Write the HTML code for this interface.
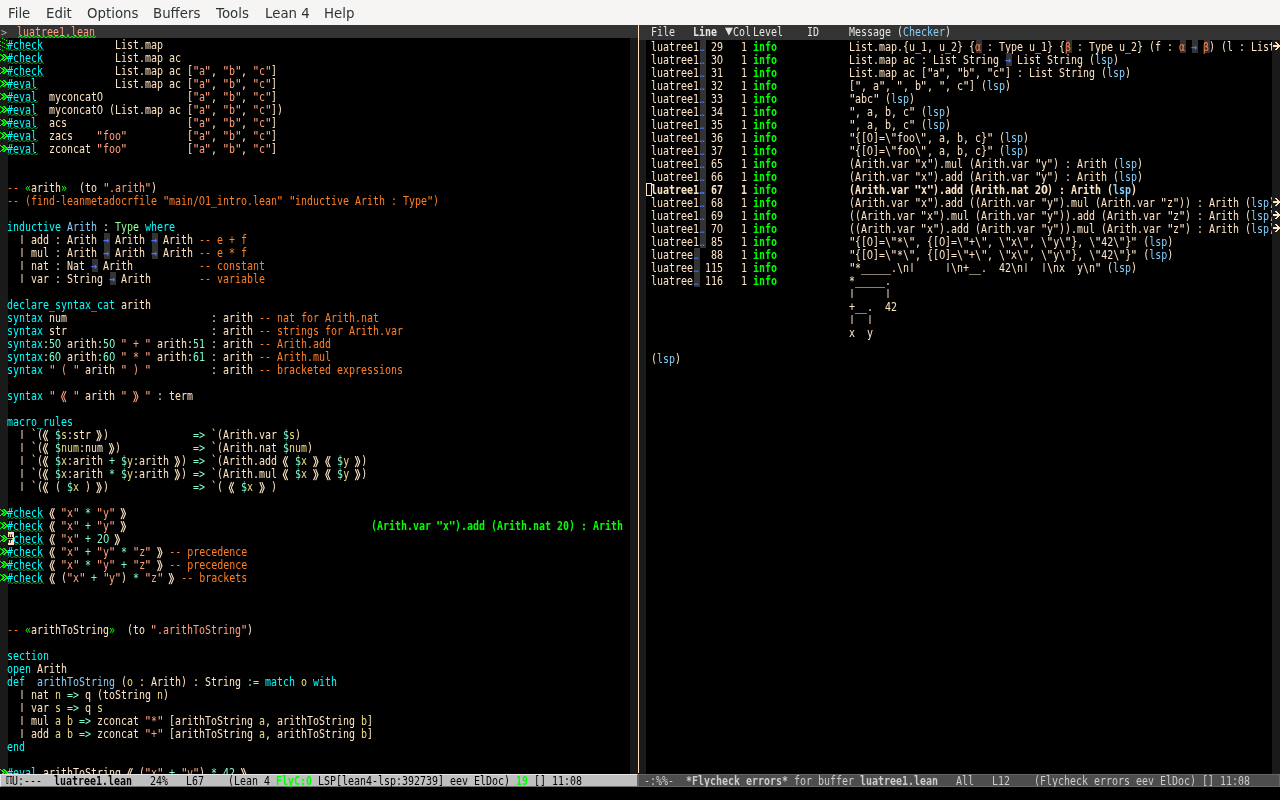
<!DOCTYPE html>
<html lang="en"><head><meta charset="utf-8"><title>emacs - luatree1.lean</title>
<style>
html,body{margin:0;padding:0}
body{width:1280px;height:800px;overflow:hidden;position:relative;background:#000;color:#ffe4c4;
 font-family:"DejaVu Sans Mono","Liberation Mono",monospace;font-size:12px;line-height:13px;letter-spacing:0.00000px;
 -webkit-font-smoothing:antialiased}
div,span,i,b{margin:0;padding:0}
i{font-style:normal}
.abs{position:absolute}
.r{position:absolute;height:13px;white-space:pre;overflow:visible;margin-left:-1px;transform:scaleX(0.83049);transform-origin:0 0}
.k{color:#00ffff}.c{color:#ff7f24}.s{color:#ffa07a}.f{color:#87cefa}.t{color:#98fb98}
.n{color:#7fffd4}.v{color:#eedd82}.g{color:#00ff00}
.ar{color:#4876ff;font-weight:bold}
.al{color:#ff7f50}
.el{color:#4876ff;display:inline-block;width:7.2246px;letter-spacing:0;font-size:10px;text-indent:0.6px;position:relative;top:-0.5px}
.cur{color:#000}
.b{font-weight:bold}
.gb{color:#00ff00;font-weight:bold}
.ql,.qr{display:inline-block;width:7.2246px;height:13px;vertical-align:top;letter-spacing:0;font-size:12px;overflow:visible;
 font-family:"Noto Sans CJK SC","Noto Sans CJK JP",sans-serif;position:relative;top:0px;font-weight:700;transform:scaleX(1.2041);transform-origin:0 0}
.vb{display:inline-block;height:13px;vertical-align:top;transform:translateY(-1.3px) scaleY(.77);transform-origin:50% 50%}
.dq{display:inline-block;transform:scaleX(1.2041);transform-origin:50% 0}
.z{display:inline-block;width:7.2246px;font-family:"DejaVu Sans","Liberation Sans",sans-serif;text-indent:-0.2px}
.ql{text-indent:-6.20px}
.qr{text-indent:-0.60px}
#menubar{left:0;top:0;width:1280px;height:25px;background:#f6f5f4;color:#2e3436;
 font-family:"DejaVu Sans","Liberation Sans",sans-serif;font-size:13.33px;letter-spacing:0;line-height:28px}
#menubar span{position:absolute;top:0}
.fr{background:#1a1a1a}
.hl{background:#333;color:#e5e5e5}
#mlL{left:0;top:774px;width:638px;height:13px;background:#bfbfbf;color:#000;white-space:pre;box-sizing:border-box}
#mlR{left:638px;top:774px;width:642px;height:13px;background:#4d4d4d;color:#ccc;white-space:pre;box-sizing:border-box}
svg{position:absolute;overflow:visible}
</style></head><body>
<div id="all" style="position:absolute;left:0;top:0;width:1280px;height:800px;will-change:transform">
<div id="menubar" class="abs"><span style="left:8px">File</span><span style="left:46px">Edit</span><span style="left:87px">Options</span><span style="left:153px">Buffers</span><span style="left:216px">Tools</span><span style="left:265px">Lean 4</span><span style="left:324px">Help</span></div>
<div class="abs fr" style="left:0;top:38px;width:8px;height:736px"></div><div class="abs fr" style="left:630px;top:38px;width:8px;height:736px"></div><div class="abs" style="left:638px;top:25px;width:1px;height:748px;background:#ffe4c4"></div><div class="abs fr" style="left:639px;top:40px;width:7px;height:734px"></div>
<div class="abs hl" style="left:0;top:25px;width:638px;height:13px"></div><div class="abs hl" style="left:639px;top:25px;width:641px;height:15px"></div>
<div class="r" style="left:2px;top:26px;color:#b3b3b3;font-size:10px;letter-spacing:0;transform:none">&gt;</div><div class="r s" style="left:18px;top:26px">luatree1.lean</div>
<svg style="left:18px;top:36px" width="78" height="2" viewBox="0 0 78 2"><polyline points="0,1.6 2,0.4 4,1.6 6,0.4 8,1.6 10,0.4 12,1.6 14,0.4 16,1.6 18,0.4 20,1.6 22,0.4 24,1.6 26,0.4 28,1.6 30,0.4 32,1.6 34,0.4 36,1.6 38,0.4 40,1.6 42,0.4 44,1.6 46,0.4 48,1.6 50,0.4 52,1.6 54,0.4 56,1.6 58,0.4 60,1.6 62,0.4 64,1.6 66,0.4 68,1.6 70,0.4 72,1.6 74,0.4 76,1.6 78,0.4" fill="none" stroke="#00ff00" stroke-width="1"/></svg>
<div class="r" style="left:652px;top:26px;color:#e5e5e5">File</div><div class="r b" style="left:694px;top:26px;color:#e5e5e5">Line</div><div class="r" style="left:734px;top:26px;color:#e5e5e5">Col</div><div class="r" style="left:754px;top:26px;color:#e5e5e5">Level</div><div class="r" style="left:808px;top:26px;color:#e5e5e5">ID</div><div class="r" style="left:726px;top:24px;color:#e5e5e5;letter-spacing:0;font-size:13px;transform:none">▼</div><div class="r" style="left:850px;top:26px;color:#e5e5e5">Message (<span class="f">Checker</span>)</div>
<div class="r" style="left:8px;top:39px"><span class="k">#check</span>            List.map</div>
<div class="r" style="left:8px;top:52px"><span class="k">#check</span>            List.map ac</div>
<div class="r" style="left:8px;top:65px"><span class="k">#check</span>            List.map ac [<span class="s"><i class="dq">"</i>a<i class="dq">"</i></span>, <span class="s"><i class="dq">"</i>b<i class="dq">"</i></span>, <span class="s"><i class="dq">"</i>c<i class="dq">"</i></span>]</div>
<div class="r" style="left:8px;top:78px"><span class="k">#eval</span>             List.map ac [<span class="s"><i class="dq">"</i>a<i class="dq">"</i></span>, <span class="s"><i class="dq">"</i>b<i class="dq">"</i></span>, <span class="s"><i class="dq">"</i>c<i class="dq">"</i></span>]</div>
<div class="r" style="left:8px;top:91px"><span class="k">#eval</span>  myconcat<i class="z">0</i>              [<span class="s"><i class="dq">"</i>a<i class="dq">"</i></span>, <span class="s"><i class="dq">"</i>b<i class="dq">"</i></span>, <span class="s"><i class="dq">"</i>c<i class="dq">"</i></span>]</div>
<div class="r" style="left:8px;top:104px"><span class="k">#eval</span>  myconcat<i class="z">0</i> (List.map ac [<span class="s"><i class="dq">"</i>a<i class="dq">"</i></span>, <span class="s"><i class="dq">"</i>b<i class="dq">"</i></span>, <span class="s"><i class="dq">"</i>c<i class="dq">"</i></span>])</div>
<div class="r" style="left:8px;top:117px"><span class="k">#eval</span>  acs                    [<span class="s"><i class="dq">"</i>a<i class="dq">"</i></span>, <span class="s"><i class="dq">"</i>b<i class="dq">"</i></span>, <span class="s"><i class="dq">"</i>c<i class="dq">"</i></span>]</div>
<div class="r" style="left:8px;top:130px"><span class="k">#eval</span>  zacs    <span class="s"><i class="dq">"</i>foo<i class="dq">"</i></span>          [<span class="s"><i class="dq">"</i>a<i class="dq">"</i></span>, <span class="s"><i class="dq">"</i>b<i class="dq">"</i></span>, <span class="s"><i class="dq">"</i>c<i class="dq">"</i></span>]</div>
<div class="r" style="left:8px;top:143px"><span class="k">#eval</span>  zconcat <span class="s"><i class="dq">"</i>foo<i class="dq">"</i></span>          [<span class="s"><i class="dq">"</i>a<i class="dq">"</i></span>, <span class="s"><i class="dq">"</i>b<i class="dq">"</i></span>, <span class="s"><i class="dq">"</i>c<i class="dq">"</i></span>]</div>
<div class="r" style="left:8px;top:182px"><span class="c">-- </span><span class="g">«</span>arith<span class="g">»</span>  (to <span class="s"><i class="dq">"</i>.arith<i class="dq">"</i></span>)</div>
<div class="r" style="left:8px;top:195px"><span class="c">-- (find-leanmetadocrfile <i class="dq">"</i>main/<i class="z">0</i>1_intro.lean<i class="dq">"</i> <i class="dq">"</i>inductive Arith : Type<i class="dq">"</i>)</span></div>
<div class="r" style="left:8px;top:221px"><span class="k">inductive</span> <span class="f">Arith</span> : <span class="t">Type</span> <span class="k">where</span></div>
<div class="abs" style="left:104px;top:233px;width:6px;height:13px;background:#333"></div><div class="abs" style="left:152px;top:233px;width:6px;height:13px;background:#333"></div><div class="r" style="left:8px;top:234px">  <i class="vb">|</i> add : Arith <span class="ar">→</span> Arith <span class="ar">→</span> Arith <span class="c">-- e + f</span></div>
<div class="abs" style="left:104px;top:246px;width:6px;height:13px;background:#333"></div><div class="abs" style="left:152px;top:246px;width:6px;height:13px;background:#333"></div><div class="r" style="left:8px;top:247px">  <i class="vb">|</i> mul : Arith <span class="ar">→</span> Arith <span class="ar">→</span> Arith <span class="c">-- e * f</span></div>
<div class="abs" style="left:92px;top:259px;width:6px;height:13px;background:#333"></div><div class="r" style="left:8px;top:260px">  <i class="vb">|</i> nat : Nat <span class="ar">→</span> Arith           <span class="c">-- constant</span></div>
<div class="abs" style="left:110px;top:272px;width:6px;height:13px;background:#333"></div><div class="r" style="left:8px;top:273px">  <i class="vb">|</i> var : String <span class="ar">→</span> Arith        <span class="c">-- variable</span></div>
<div class="r" style="left:8px;top:299px"><span class="k">declare_syntax_cat</span> arith</div>
<div class="r" style="left:8px;top:312px"><span class="k">syntax</span> num                        : arith <span class="c">-- nat for Arith.nat</span></div>
<div class="r" style="left:8px;top:325px"><span class="k">syntax</span> str                        : arith <span class="c">-- strings for Arith.var</span></div>
<div class="r" style="left:8px;top:338px"><span class="k">syntax</span>:<span class="n">5<i class="z">0</i></span> arith:<span class="n">5<i class="z">0</i></span> <span class="s"><i class="dq">"</i> + <i class="dq">"</i></span> arith:<span class="n">51</span> : arith <span class="c">-- Arith.add</span></div>
<div class="r" style="left:8px;top:351px"><span class="k">syntax</span>:<span class="n">6<i class="z">0</i></span> arith:<span class="n">6<i class="z">0</i></span> <span class="s"><i class="dq">"</i> * <i class="dq">"</i></span> arith:<span class="n">61</span> : arith <span class="c">-- Arith.mul</span></div>
<div class="r" style="left:8px;top:364px"><span class="k">syntax</span> <span class="s"><i class="dq">"</i> ( <i class="dq">"</i></span> arith <span class="s"><i class="dq">"</i> ) <i class="dq">"</i></span>          : arith <span class="c">-- bracketed expressions</span></div>
<div class="r" style="left:8px;top:390px"><span class="k">syntax</span> <span class="s"><i class="dq">"</i> <i class="ql">《</i> <i class="dq">"</i></span> arith <span class="s"><i class="dq">"</i> <i class="qr">》</i> <i class="dq">"</i></span> : term</div>
<div class="r" style="left:8px;top:416px"><span class="k">macro_rules</span></div>
<div class="r" style="left:8px;top:429px">  <i class="vb">|</i> `(<i class="ql">《</i> <span class="n">$</span><span class="v">s</span>:str <i class="qr">》</i>)              <span class="n">=&gt;</span> `(Arith.var <span class="n">$</span><span class="v">s</span>)</div>
<div class="r" style="left:8px;top:442px">  <i class="vb">|</i> `(<i class="ql">《</i> <span class="n">$</span><span class="v">num</span>:num <i class="qr">》</i>)            <span class="n">=&gt;</span> `(Arith.nat <span class="n">$</span><span class="v">num</span>)</div>
<div class="r" style="left:8px;top:455px">  <i class="vb">|</i> `(<i class="ql">《</i> <span class="n">$</span><span class="v">x</span>:arith <span class="n">+</span> <span class="n">$</span><span class="v">y</span>:arith <i class="qr">》</i>) <span class="n">=&gt;</span> `(Arith.add <i class="ql">《</i> <span class="n">$</span><span class="v">x</span> <i class="qr">》</i> <i class="ql">《</i> <span class="n">$</span><span class="v">y</span> <i class="qr">》</i>)</div>
<div class="r" style="left:8px;top:468px">  <i class="vb">|</i> `(<i class="ql">《</i> <span class="n">$</span><span class="v">x</span>:arith <span class="n">*</span> <span class="n">$</span><span class="v">y</span>:arith <i class="qr">》</i>) <span class="n">=&gt;</span> `(Arith.mul <i class="ql">《</i> <span class="n">$</span><span class="v">x</span> <i class="qr">》</i> <i class="ql">《</i> <span class="n">$</span><span class="v">y</span> <i class="qr">》</i>)</div>
<div class="r" style="left:8px;top:481px">  <i class="vb">|</i> `(<i class="ql">《</i> ( <span class="n">$</span><span class="v">x</span> ) <i class="qr">》</i>)              <span class="n">=&gt;</span> `( <i class="ql">《</i> <span class="n">$</span><span class="v">x</span> <i class="qr">》</i> )</div>
<div class="r" style="left:8px;top:507px"><span class="k">#check</span> <i class="ql">《</i> <span class="s"><i class="dq">"</i>x<i class="dq">"</i></span> <span class="n">*</span> <span class="s"><i class="dq">"</i>y<i class="dq">"</i></span> <i class="qr">》</i></div>
<div class="r" style="left:8px;top:520px"><span class="k">#check</span> <i class="ql">《</i> <span class="s"><i class="dq">"</i>x<i class="dq">"</i></span> <span class="n">+</span> <span class="s"><i class="dq">"</i>y<i class="dq">"</i></span> <i class="qr">》</i></div>
<div class="abs" style="left:8px;top:532px;width:6px;height:13px;background:#ffe4c4"></div><div class="r" style="left:8px;top:533px"><span class="cur">#</span><span class="k">check</span> <i class="ql">《</i> <span class="s"><i class="dq">"</i>x<i class="dq">"</i></span> <span class="n">+</span> <span class="n">2<i class="z">0</i></span> <i class="qr">》</i></div>
<div class="r" style="left:8px;top:546px"><span class="k">#check</span> <i class="ql">《</i> <span class="s"><i class="dq">"</i>x<i class="dq">"</i></span> <span class="n">+</span> <span class="s"><i class="dq">"</i>y<i class="dq">"</i></span> <span class="n">*</span> <span class="s"><i class="dq">"</i>z<i class="dq">"</i></span> <i class="qr">》</i> <span class="c">-- precedence</span></div>
<div class="r" style="left:8px;top:559px"><span class="k">#check</span> <i class="ql">《</i> <span class="s"><i class="dq">"</i>x<i class="dq">"</i></span> <span class="n">*</span> <span class="s"><i class="dq">"</i>y<i class="dq">"</i></span> <span class="n">+</span> <span class="s"><i class="dq">"</i>z<i class="dq">"</i></span> <i class="qr">》</i> <span class="c">-- precedence</span></div>
<div class="r" style="left:8px;top:572px"><span class="k">#check</span> <i class="ql">《</i> (<span class="s"><i class="dq">"</i>x<i class="dq">"</i></span> <span class="n">+</span> <span class="s"><i class="dq">"</i>y<i class="dq">"</i></span>) <span class="n">*</span> <span class="s"><i class="dq">"</i>z<i class="dq">"</i></span> <i class="qr">》</i> <span class="c">-- brackets</span></div>
<div class="r" style="left:8px;top:624px"><span class="c">-- </span><span class="g">«</span>arithToString<span class="g">»</span>  (to <span class="s"><i class="dq">"</i>.arithToString<i class="dq">"</i></span>)</div>
<div class="r" style="left:8px;top:650px"><span class="k">section</span></div>
<div class="r" style="left:8px;top:663px"><span class="k">open</span> Arith</div>
<div class="r" style="left:8px;top:676px"><span class="k">def</span>  <span class="f">arithToString</span> (<span class="v">o</span> : Arith) : String <span class="n">:=</span> <span class="k">match</span> <span class="v">o</span> <span class="k">with</span></div>
<div class="r" style="left:8px;top:689px">  <i class="vb">|</i> nat <span class="v">n</span> <span class="n">=&gt;</span> q (toString <span class="v">n</span>)</div>
<div class="r" style="left:8px;top:702px">  <i class="vb">|</i> var <span class="v">s</span> <span class="n">=&gt;</span> q <span class="v">s</span></div>
<div class="r" style="left:8px;top:715px">  <i class="vb">|</i> mul <span class="v">a</span> <span class="v">b</span> <span class="n">=&gt;</span> zconcat <span class="s"><i class="dq">"</i>*<i class="dq">"</i></span> [arithToString <span class="v">a</span>, arithToString <span class="v">b</span>]</div>
<div class="r" style="left:8px;top:728px">  <i class="vb">|</i> add <span class="v">a</span> <span class="v">b</span> <span class="n">=&gt;</span> zconcat <span class="s"><i class="dq">"</i>+<i class="dq">"</i></span> [arithToString <span class="v">a</span>, arithToString <span class="v">b</span>]</div>
<div class="r" style="left:8px;top:741px"><span class="k">end</span></div>
<div class="r" style="left:8px;top:767px"><span class="k">#eval</span> arithToString <i class="ql">《</i> (<span class="s"><i class="dq">"</i>x<i class="dq">"</i></span> <span class="n">+</span> <span class="s"><i class="dq">"</i>y<i class="dq">"</i></span>) <span class="n">*</span> <span class="n">42</span> <i class="qr">》</i></div>
<svg style="left:8px;top:49px" width="36" height="2" viewBox="0 0 36 2"><polyline points="0,1.6 2,0.4 4,1.6 6,0.4 8,1.6 10,0.4 12,1.6 14,0.4 16,1.6 18,0.4 20,1.6 22,0.4 24,1.6 26,0.4 28,1.6 30,0.4 32,1.6 34,0.4 36,1.6" fill="none" stroke="#228b22" stroke-width="1"/></svg><svg style="left:8px;top:62px" width="36" height="2" viewBox="0 0 36 2"><polyline points="0,1.6 2,0.4 4,1.6 6,0.4 8,1.6 10,0.4 12,1.6 14,0.4 16,1.6 18,0.4 20,1.6 22,0.4 24,1.6 26,0.4 28,1.6 30,0.4 32,1.6 34,0.4 36,1.6" fill="none" stroke="#228b22" stroke-width="1"/></svg><svg style="left:8px;top:75px" width="36" height="2" viewBox="0 0 36 2"><polyline points="0,1.6 2,0.4 4,1.6 6,0.4 8,1.6 10,0.4 12,1.6 14,0.4 16,1.6 18,0.4 20,1.6 22,0.4 24,1.6 26,0.4 28,1.6 30,0.4 32,1.6 34,0.4 36,1.6" fill="none" stroke="#228b22" stroke-width="1"/></svg><svg style="left:8px;top:88px" width="30" height="2" viewBox="0 0 30 2"><polyline points="0,1.6 2,0.4 4,1.6 6,0.4 8,1.6 10,0.4 12,1.6 14,0.4 16,1.6 18,0.4 20,1.6 22,0.4 24,1.6 26,0.4 28,1.6 30,0.4" fill="none" stroke="#228b22" stroke-width="1"/></svg><svg style="left:8px;top:101px" width="30" height="2" viewBox="0 0 30 2"><polyline points="0,1.6 2,0.4 4,1.6 6,0.4 8,1.6 10,0.4 12,1.6 14,0.4 16,1.6 18,0.4 20,1.6 22,0.4 24,1.6 26,0.4 28,1.6 30,0.4" fill="none" stroke="#228b22" stroke-width="1"/></svg><svg style="left:8px;top:114px" width="30" height="2" viewBox="0 0 30 2"><polyline points="0,1.6 2,0.4 4,1.6 6,0.4 8,1.6 10,0.4 12,1.6 14,0.4 16,1.6 18,0.4 20,1.6 22,0.4 24,1.6 26,0.4 28,1.6 30,0.4" fill="none" stroke="#228b22" stroke-width="1"/></svg><svg style="left:8px;top:127px" width="30" height="2" viewBox="0 0 30 2"><polyline points="0,1.6 2,0.4 4,1.6 6,0.4 8,1.6 10,0.4 12,1.6 14,0.4 16,1.6 18,0.4 20,1.6 22,0.4 24,1.6 26,0.4 28,1.6 30,0.4" fill="none" stroke="#228b22" stroke-width="1"/></svg><svg style="left:8px;top:140px" width="30" height="2" viewBox="0 0 30 2"><polyline points="0,1.6 2,0.4 4,1.6 6,0.4 8,1.6 10,0.4 12,1.6 14,0.4 16,1.6 18,0.4 20,1.6 22,0.4 24,1.6 26,0.4 28,1.6 30,0.4" fill="none" stroke="#228b22" stroke-width="1"/></svg><svg style="left:8px;top:153px" width="30" height="2" viewBox="0 0 30 2"><polyline points="0,1.6 2,0.4 4,1.6 6,0.4 8,1.6 10,0.4 12,1.6 14,0.4 16,1.6 18,0.4 20,1.6 22,0.4 24,1.6 26,0.4 28,1.6 30,0.4" fill="none" stroke="#228b22" stroke-width="1"/></svg><svg style="left:8px;top:517px" width="36" height="2" viewBox="0 0 36 2"><polyline points="0,1.6 2,0.4 4,1.6 6,0.4 8,1.6 10,0.4 12,1.6 14,0.4 16,1.6 18,0.4 20,1.6 22,0.4 24,1.6 26,0.4 28,1.6 30,0.4 32,1.6 34,0.4 36,1.6" fill="none" stroke="#228b22" stroke-width="1"/></svg><svg style="left:8px;top:530px" width="36" height="2" viewBox="0 0 36 2"><polyline points="0,1.6 2,0.4 4,1.6 6,0.4 8,1.6 10,0.4 12,1.6 14,0.4 16,1.6 18,0.4 20,1.6 22,0.4 24,1.6 26,0.4 28,1.6 30,0.4 32,1.6 34,0.4 36,1.6" fill="none" stroke="#228b22" stroke-width="1"/></svg><svg style="left:14px;top:543px" width="30" height="2" viewBox="0 0 30 2"><polyline points="0,0.4 2,1.6 4,0.4 6,1.6 8,0.4 10,1.6 12,0.4 14,1.6 16,0.4 18,1.6 20,0.4 22,1.6 24,0.4 26,1.6 28,0.4 30,1.6" fill="none" stroke="#228b22" stroke-width="1"/></svg><svg style="left:8px;top:556px" width="36" height="2" viewBox="0 0 36 2"><polyline points="0,1.6 2,0.4 4,1.6 6,0.4 8,1.6 10,0.4 12,1.6 14,0.4 16,1.6 18,0.4 20,1.6 22,0.4 24,1.6 26,0.4 28,1.6 30,0.4 32,1.6 34,0.4 36,1.6" fill="none" stroke="#228b22" stroke-width="1"/></svg><svg style="left:8px;top:569px" width="36" height="2" viewBox="0 0 36 2"><polyline points="0,1.6 2,0.4 4,1.6 6,0.4 8,1.6 10,0.4 12,1.6 14,0.4 16,1.6 18,0.4 20,1.6 22,0.4 24,1.6 26,0.4 28,1.6 30,0.4 32,1.6 34,0.4 36,1.6" fill="none" stroke="#228b22" stroke-width="1"/></svg><svg style="left:8px;top:582px" width="36" height="2" viewBox="0 0 36 2"><polyline points="0,1.6 2,0.4 4,1.6 6,0.4 8,1.6 10,0.4 12,1.6 14,0.4 16,1.6 18,0.4 20,1.6 22,0.4 24,1.6 26,0.4 28,1.6 30,0.4 32,1.6 34,0.4 36,1.6" fill="none" stroke="#228b22" stroke-width="1"/></svg><svg style="left:8px;top:777px" width="30" height="2" viewBox="0 0 30 2"><polyline points="0,1.6 2,0.4 4,1.6 6,0.4 8,1.6 10,0.4 12,1.6 14,0.4 16,1.6 18,0.4 20,1.6 22,0.4 24,1.6 26,0.4 28,1.6 30,0.4" fill="none" stroke="#228b22" stroke-width="1"/></svg>
<div class="r gb" style="left:372px;top:520px">(Arith.var <i class="dq">"</i>x<i class="dq">"</i>).add (Arith.nat 20) : Arith</div>
<svg style="left:0px;top:54px" width="8" height="7" viewBox="0 0 8 7" shape-rendering="crispEdges"><path d="M0 0h1v1h-1zM3 0h1v1h-1zM4 0h1v1h-1zM1 1h1v1h-1zM2 1h1v1h-1zM4 1h1v1h-1zM5 1h1v1h-1zM2 2h1v1h-1zM3 2h1v1h-1zM5 2h1v1h-1zM6 2h1v1h-1zM3 3h1v1h-1zM4 3h1v1h-1zM6 3h1v1h-1zM7 3h1v1h-1zM2 4h1v1h-1zM3 4h1v1h-1zM5 4h1v1h-1zM6 4h1v1h-1zM1 5h1v1h-1zM2 5h1v1h-1zM4 5h1v1h-1zM5 5h1v1h-1zM0 6h1v1h-1zM3 6h1v1h-1zM4 6h1v1h-1z" fill="#00ff00"/></svg><svg style="left:0px;top:67px" width="8" height="7" viewBox="0 0 8 7" shape-rendering="crispEdges"><path d="M0 0h1v1h-1zM3 0h1v1h-1zM4 0h1v1h-1zM1 1h1v1h-1zM2 1h1v1h-1zM4 1h1v1h-1zM5 1h1v1h-1zM2 2h1v1h-1zM3 2h1v1h-1zM5 2h1v1h-1zM6 2h1v1h-1zM3 3h1v1h-1zM4 3h1v1h-1zM6 3h1v1h-1zM7 3h1v1h-1zM2 4h1v1h-1zM3 4h1v1h-1zM5 4h1v1h-1zM6 4h1v1h-1zM1 5h1v1h-1zM2 5h1v1h-1zM4 5h1v1h-1zM5 5h1v1h-1zM0 6h1v1h-1zM3 6h1v1h-1zM4 6h1v1h-1z" fill="#00ff00"/></svg><svg style="left:0px;top:80px" width="8" height="7" viewBox="0 0 8 7" shape-rendering="crispEdges"><path d="M0 0h1v1h-1zM3 0h1v1h-1zM4 0h1v1h-1zM1 1h1v1h-1zM2 1h1v1h-1zM4 1h1v1h-1zM5 1h1v1h-1zM2 2h1v1h-1zM3 2h1v1h-1zM5 2h1v1h-1zM6 2h1v1h-1zM3 3h1v1h-1zM4 3h1v1h-1zM6 3h1v1h-1zM7 3h1v1h-1zM2 4h1v1h-1zM3 4h1v1h-1zM5 4h1v1h-1zM6 4h1v1h-1zM1 5h1v1h-1zM2 5h1v1h-1zM4 5h1v1h-1zM5 5h1v1h-1zM0 6h1v1h-1zM3 6h1v1h-1zM4 6h1v1h-1z" fill="#00ff00"/></svg><svg style="left:0px;top:93px" width="8" height="7" viewBox="0 0 8 7" shape-rendering="crispEdges"><path d="M0 0h1v1h-1zM3 0h1v1h-1zM4 0h1v1h-1zM1 1h1v1h-1zM2 1h1v1h-1zM4 1h1v1h-1zM5 1h1v1h-1zM2 2h1v1h-1zM3 2h1v1h-1zM5 2h1v1h-1zM6 2h1v1h-1zM3 3h1v1h-1zM4 3h1v1h-1zM6 3h1v1h-1zM7 3h1v1h-1zM2 4h1v1h-1zM3 4h1v1h-1zM5 4h1v1h-1zM6 4h1v1h-1zM1 5h1v1h-1zM2 5h1v1h-1zM4 5h1v1h-1zM5 5h1v1h-1zM0 6h1v1h-1zM3 6h1v1h-1zM4 6h1v1h-1z" fill="#00ff00"/></svg><svg style="left:0px;top:106px" width="8" height="7" viewBox="0 0 8 7" shape-rendering="crispEdges"><path d="M0 0h1v1h-1zM3 0h1v1h-1zM4 0h1v1h-1zM1 1h1v1h-1zM2 1h1v1h-1zM4 1h1v1h-1zM5 1h1v1h-1zM2 2h1v1h-1zM3 2h1v1h-1zM5 2h1v1h-1zM6 2h1v1h-1zM3 3h1v1h-1zM4 3h1v1h-1zM6 3h1v1h-1zM7 3h1v1h-1zM2 4h1v1h-1zM3 4h1v1h-1zM5 4h1v1h-1zM6 4h1v1h-1zM1 5h1v1h-1zM2 5h1v1h-1zM4 5h1v1h-1zM5 5h1v1h-1zM0 6h1v1h-1zM3 6h1v1h-1zM4 6h1v1h-1z" fill="#00ff00"/></svg><svg style="left:0px;top:119px" width="8" height="7" viewBox="0 0 8 7" shape-rendering="crispEdges"><path d="M0 0h1v1h-1zM3 0h1v1h-1zM4 0h1v1h-1zM1 1h1v1h-1zM2 1h1v1h-1zM4 1h1v1h-1zM5 1h1v1h-1zM2 2h1v1h-1zM3 2h1v1h-1zM5 2h1v1h-1zM6 2h1v1h-1zM3 3h1v1h-1zM4 3h1v1h-1zM6 3h1v1h-1zM7 3h1v1h-1zM2 4h1v1h-1zM3 4h1v1h-1zM5 4h1v1h-1zM6 4h1v1h-1zM1 5h1v1h-1zM2 5h1v1h-1zM4 5h1v1h-1zM5 5h1v1h-1zM0 6h1v1h-1zM3 6h1v1h-1zM4 6h1v1h-1z" fill="#00ff00"/></svg><svg style="left:0px;top:132px" width="8" height="7" viewBox="0 0 8 7" shape-rendering="crispEdges"><path d="M0 0h1v1h-1zM3 0h1v1h-1zM4 0h1v1h-1zM1 1h1v1h-1zM2 1h1v1h-1zM4 1h1v1h-1zM5 1h1v1h-1zM2 2h1v1h-1zM3 2h1v1h-1zM5 2h1v1h-1zM6 2h1v1h-1zM3 3h1v1h-1zM4 3h1v1h-1zM6 3h1v1h-1zM7 3h1v1h-1zM2 4h1v1h-1zM3 4h1v1h-1zM5 4h1v1h-1zM6 4h1v1h-1zM1 5h1v1h-1zM2 5h1v1h-1zM4 5h1v1h-1zM5 5h1v1h-1zM0 6h1v1h-1zM3 6h1v1h-1zM4 6h1v1h-1z" fill="#00ff00"/></svg><svg style="left:0px;top:145px" width="8" height="7" viewBox="0 0 8 7" shape-rendering="crispEdges"><path d="M0 0h1v1h-1zM3 0h1v1h-1zM4 0h1v1h-1zM1 1h1v1h-1zM2 1h1v1h-1zM4 1h1v1h-1zM5 1h1v1h-1zM2 2h1v1h-1zM3 2h1v1h-1zM5 2h1v1h-1zM6 2h1v1h-1zM3 3h1v1h-1zM4 3h1v1h-1zM6 3h1v1h-1zM7 3h1v1h-1zM2 4h1v1h-1zM3 4h1v1h-1zM5 4h1v1h-1zM6 4h1v1h-1zM1 5h1v1h-1zM2 5h1v1h-1zM4 5h1v1h-1zM5 5h1v1h-1zM0 6h1v1h-1zM3 6h1v1h-1zM4 6h1v1h-1z" fill="#00ff00"/></svg><svg style="left:0px;top:509px" width="8" height="7" viewBox="0 0 8 7" shape-rendering="crispEdges"><path d="M0 0h1v1h-1zM3 0h1v1h-1zM4 0h1v1h-1zM1 1h1v1h-1zM2 1h1v1h-1zM4 1h1v1h-1zM5 1h1v1h-1zM2 2h1v1h-1zM3 2h1v1h-1zM5 2h1v1h-1zM6 2h1v1h-1zM3 3h1v1h-1zM4 3h1v1h-1zM6 3h1v1h-1zM7 3h1v1h-1zM2 4h1v1h-1zM3 4h1v1h-1zM5 4h1v1h-1zM6 4h1v1h-1zM1 5h1v1h-1zM2 5h1v1h-1zM4 5h1v1h-1zM5 5h1v1h-1zM0 6h1v1h-1zM3 6h1v1h-1zM4 6h1v1h-1z" fill="#00ff00"/></svg><svg style="left:0px;top:522px" width="8" height="7" viewBox="0 0 8 7" shape-rendering="crispEdges"><path d="M0 0h1v1h-1zM3 0h1v1h-1zM4 0h1v1h-1zM1 1h1v1h-1zM2 1h1v1h-1zM4 1h1v1h-1zM5 1h1v1h-1zM2 2h1v1h-1zM3 2h1v1h-1zM5 2h1v1h-1zM6 2h1v1h-1zM3 3h1v1h-1zM4 3h1v1h-1zM6 3h1v1h-1zM7 3h1v1h-1zM2 4h1v1h-1zM3 4h1v1h-1zM5 4h1v1h-1zM6 4h1v1h-1zM1 5h1v1h-1zM2 5h1v1h-1zM4 5h1v1h-1zM5 5h1v1h-1zM0 6h1v1h-1zM3 6h1v1h-1zM4 6h1v1h-1z" fill="#00ff00"/></svg><svg style="left:0px;top:535px" width="8" height="7" viewBox="0 0 8 7" shape-rendering="crispEdges"><path d="M0 0h1v1h-1zM3 0h1v1h-1zM4 0h1v1h-1zM1 1h1v1h-1zM2 1h1v1h-1zM4 1h1v1h-1zM5 1h1v1h-1zM2 2h1v1h-1zM3 2h1v1h-1zM5 2h1v1h-1zM6 2h1v1h-1zM3 3h1v1h-1zM4 3h1v1h-1zM6 3h1v1h-1zM7 3h1v1h-1zM2 4h1v1h-1zM3 4h1v1h-1zM5 4h1v1h-1zM6 4h1v1h-1zM1 5h1v1h-1zM2 5h1v1h-1zM4 5h1v1h-1zM5 5h1v1h-1zM0 6h1v1h-1zM3 6h1v1h-1zM4 6h1v1h-1z" fill="#00ff00"/></svg><svg style="left:0px;top:548px" width="8" height="7" viewBox="0 0 8 7" shape-rendering="crispEdges"><path d="M0 0h1v1h-1zM3 0h1v1h-1zM4 0h1v1h-1zM1 1h1v1h-1zM2 1h1v1h-1zM4 1h1v1h-1zM5 1h1v1h-1zM2 2h1v1h-1zM3 2h1v1h-1zM5 2h1v1h-1zM6 2h1v1h-1zM3 3h1v1h-1zM4 3h1v1h-1zM6 3h1v1h-1zM7 3h1v1h-1zM2 4h1v1h-1zM3 4h1v1h-1zM5 4h1v1h-1zM6 4h1v1h-1zM1 5h1v1h-1zM2 5h1v1h-1zM4 5h1v1h-1zM5 5h1v1h-1zM0 6h1v1h-1zM3 6h1v1h-1zM4 6h1v1h-1z" fill="#00ff00"/></svg><svg style="left:0px;top:561px" width="8" height="7" viewBox="0 0 8 7" shape-rendering="crispEdges"><path d="M0 0h1v1h-1zM3 0h1v1h-1zM4 0h1v1h-1zM1 1h1v1h-1zM2 1h1v1h-1zM4 1h1v1h-1zM5 1h1v1h-1zM2 2h1v1h-1zM3 2h1v1h-1zM5 2h1v1h-1zM6 2h1v1h-1zM3 3h1v1h-1zM4 3h1v1h-1zM6 3h1v1h-1zM7 3h1v1h-1zM2 4h1v1h-1zM3 4h1v1h-1zM5 4h1v1h-1zM6 4h1v1h-1zM1 5h1v1h-1zM2 5h1v1h-1zM4 5h1v1h-1zM5 5h1v1h-1zM0 6h1v1h-1zM3 6h1v1h-1zM4 6h1v1h-1z" fill="#00ff00"/></svg><svg style="left:0px;top:574px" width="8" height="7" viewBox="0 0 8 7" shape-rendering="crispEdges"><path d="M0 0h1v1h-1zM3 0h1v1h-1zM4 0h1v1h-1zM1 1h1v1h-1zM2 1h1v1h-1zM4 1h1v1h-1zM5 1h1v1h-1zM2 2h1v1h-1zM3 2h1v1h-1zM5 2h1v1h-1zM6 2h1v1h-1zM3 3h1v1h-1zM4 3h1v1h-1zM6 3h1v1h-1zM7 3h1v1h-1zM2 4h1v1h-1zM3 4h1v1h-1zM5 4h1v1h-1zM6 4h1v1h-1zM1 5h1v1h-1zM2 5h1v1h-1zM4 5h1v1h-1zM5 5h1v1h-1zM0 6h1v1h-1zM3 6h1v1h-1zM4 6h1v1h-1z" fill="#00ff00"/></svg><svg style="left:0px;top:769px" width="8" height="7" viewBox="0 0 8 7" shape-rendering="crispEdges"><path d="M0 0h1v1h-1zM3 0h1v1h-1zM4 0h1v1h-1zM1 1h1v1h-1zM2 1h1v1h-1zM4 1h1v1h-1zM5 1h1v1h-1zM2 2h1v1h-1zM3 2h1v1h-1zM5 2h1v1h-1zM6 2h1v1h-1zM3 3h1v1h-1zM4 3h1v1h-1zM6 3h1v1h-1zM7 3h1v1h-1zM2 4h1v1h-1zM3 4h1v1h-1zM5 4h1v1h-1zM6 4h1v1h-1zM1 5h1v1h-1zM2 5h1v1h-1zM4 5h1v1h-1zM5 5h1v1h-1zM0 6h1v1h-1zM3 6h1v1h-1zM4 6h1v1h-1z" fill="#00ff00"/></svg><svg style="left:0px;top:38px" width="8" height="13" viewBox="0 0 8 13" shape-rendering="crispEdges"><path d="M2 0h1v1h-1zM4 1h1v1h-1zM6 2h1v1h-1zM0 3h1v1h-1zM2 4h1v1h-1zM4 5h1v1h-1zM6 6h1v1h-1zM0 7h1v1h-1zM2 8h1v1h-1zM4 9h1v1h-1zM6 10h1v1h-1zM0 11h1v1h-1zM2 12h1v1h-1z" fill="#00ff00"/></svg>
<div class="abs" style="left:700px;top:40px;width:6px;height:13px;background:#333"></div><div class="abs" style="left:976px;top:40px;width:6px;height:13px;background:#333"></div><div class="abs" style="left:1066px;top:40px;width:6px;height:13px;background:#333"></div><div class="abs" style="left:1180px;top:40px;width:6px;height:13px;background:#333"></div><div class="abs" style="left:1192px;top:40px;width:6px;height:13px;background:#333"></div><div class="abs" style="left:1204px;top:40px;width:6px;height:13px;background:#333"></div><div class="r" style="left:646px;top:41px"> luatree1<span class="el">…</span> 29   1 <span class="gb">info</span>            List.map.{u_1, u_2} {<span class="al">α</span> : Type u_1} {<span class="al">β</span> : Type u_2} (f : <span class="al">α</span> <span class="ar">→</span> <span class="al">β</span>) (l : List</div>
<div class="abs" style="left:700px;top:53px;width:6px;height:13px;background:#333"></div><div class="abs" style="left:1006px;top:53px;width:6px;height:13px;background:#333"></div><div class="r" style="left:646px;top:54px"> luatree1<span class="el">…</span> 3<i class="z">0</i>   1 <span class="gb">info</span>            List.map ac : List String <span class="ar">→</span> List String (<span class="f">lsp</span>)</div>
<div class="abs" style="left:700px;top:66px;width:6px;height:13px;background:#333"></div><div class="r" style="left:646px;top:67px"> luatree1<span class="el">…</span> 31   1 <span class="gb">info</span>            List.map ac [<i class="dq">"</i>a<i class="dq">"</i>, <i class="dq">"</i>b<i class="dq">"</i>, <i class="dq">"</i>c<i class="dq">"</i>] : List String (<span class="f">lsp</span>)</div>
<div class="abs" style="left:700px;top:79px;width:6px;height:13px;background:#333"></div><div class="r" style="left:646px;top:80px"> luatree1<span class="el">…</span> 32   1 <span class="gb">info</span>            [<i class="dq">"</i>, a<i class="dq">"</i>, <i class="dq">"</i>, b<i class="dq">"</i>, <i class="dq">"</i>, c<i class="dq">"</i>] (<span class="f">lsp</span>)</div>
<div class="abs" style="left:700px;top:92px;width:6px;height:13px;background:#333"></div><div class="r" style="left:646px;top:93px"> luatree1<span class="el">…</span> 33   1 <span class="gb">info</span>            <i class="dq">"</i>abc<i class="dq">"</i> (<span class="f">lsp</span>)</div>
<div class="abs" style="left:700px;top:105px;width:6px;height:13px;background:#333"></div><div class="r" style="left:646px;top:106px"> luatree1<span class="el">…</span> 34   1 <span class="gb">info</span>            <i class="dq">"</i>, a, b, c<i class="dq">"</i> (<span class="f">lsp</span>)</div>
<div class="abs" style="left:700px;top:118px;width:6px;height:13px;background:#333"></div><div class="r" style="left:646px;top:119px"> luatree1<span class="el">…</span> 35   1 <span class="gb">info</span>            <i class="dq">"</i>, a, b, c<i class="dq">"</i> (<span class="f">lsp</span>)</div>
<div class="abs" style="left:700px;top:131px;width:6px;height:13px;background:#333"></div><div class="r" style="left:646px;top:132px"> luatree1<span class="el">…</span> 36   1 <span class="gb">info</span>            <i class="dq">"</i>{[<i class="z">0</i>]=\<i class="dq">"</i>foo\<i class="dq">"</i>, a, b, c}<i class="dq">"</i> (<span class="f">lsp</span>)</div>
<div class="abs" style="left:700px;top:144px;width:6px;height:13px;background:#333"></div><div class="r" style="left:646px;top:145px"> luatree1<span class="el">…</span> 37   1 <span class="gb">info</span>            <i class="dq">"</i>{[<i class="z">0</i>]=\<i class="dq">"</i>foo\<i class="dq">"</i>, a, b, c}<i class="dq">"</i> (<span class="f">lsp</span>)</div>
<div class="abs" style="left:700px;top:157px;width:6px;height:13px;background:#333"></div><div class="r" style="left:646px;top:158px"> luatree1<span class="el">…</span> 65   1 <span class="gb">info</span>            (Arith.var <i class="dq">"</i>x<i class="dq">"</i>).mul (Arith.var <i class="dq">"</i>y<i class="dq">"</i>) : Arith (<span class="f">lsp</span>)</div>
<div class="abs" style="left:700px;top:170px;width:6px;height:13px;background:#333"></div><div class="r" style="left:646px;top:171px"> luatree1<span class="el">…</span> 66   1 <span class="gb">info</span>            (Arith.var <i class="dq">"</i>x<i class="dq">"</i>).add (Arith.var <i class="dq">"</i>y<i class="dq">"</i>) : Arith (<span class="f">lsp</span>)</div>
<div class="abs" style="left:700px;top:183px;width:6px;height:13px;background:#333"></div><div class="r b" style="left:646px;top:184px"> luatree1<span class="el">…</span> 67   1 <span class="gb">info</span>            (Arith.var <i class="dq">"</i>x<i class="dq">"</i>).add (Arith.nat 2<i class="z">0</i>) : Arith (<span class="f">lsp</span>)</div>
<div class="abs" style="left:700px;top:196px;width:6px;height:13px;background:#333"></div><div class="r" style="left:646px;top:197px"> luatree1<span class="el">…</span> 68   1 <span class="gb">info</span>            (Arith.var <i class="dq">"</i>x<i class="dq">"</i>).add ((Arith.var <i class="dq">"</i>y<i class="dq">"</i>).mul (Arith.var <i class="dq">"</i>z<i class="dq">"</i>)) : Arith (<span class="f">lsp</span>)</div>
<div class="abs" style="left:700px;top:209px;width:6px;height:13px;background:#333"></div><div class="r" style="left:646px;top:210px"> luatree1<span class="el">…</span> 69   1 <span class="gb">info</span>            ((Arith.var <i class="dq">"</i>x<i class="dq">"</i>).mul (Arith.var <i class="dq">"</i>y<i class="dq">"</i>)).add (Arith.var <i class="dq">"</i>z<i class="dq">"</i>) : Arith (<span class="f">lsp</span>)</div>
<div class="abs" style="left:700px;top:222px;width:6px;height:13px;background:#333"></div><div class="r" style="left:646px;top:223px"> luatree1<span class="el">…</span> 7<i class="z">0</i>   1 <span class="gb">info</span>            ((Arith.var <i class="dq">"</i>x<i class="dq">"</i>).add (Arith.var <i class="dq">"</i>y<i class="dq">"</i>)).mul (Arith.var <i class="dq">"</i>z<i class="dq">"</i>) : Arith (<span class="f">lsp</span>)</div>
<div class="abs" style="left:700px;top:235px;width:6px;height:13px;background:#333"></div><div class="r" style="left:646px;top:236px"> luatree1<span class="el">…</span> 85   1 <span class="gb">info</span>            <i class="dq">"</i>{[<i class="z">0</i>]=\<i class="dq">"</i>*\<i class="dq">"</i>, {[<i class="z">0</i>]=\<i class="dq">"</i>+\<i class="dq">"</i>, \<i class="dq">"</i>x\<i class="dq">"</i>, \<i class="dq">"</i>y\<i class="dq">"</i>}, \<i class="dq">"</i>42\<i class="dq">"</i>}<i class="dq">"</i> (<span class="f">lsp</span>)</div>
<div class="abs" style="left:694px;top:248px;width:6px;height:13px;background:#333"></div><div class="r" style="left:646px;top:249px"> luatree<span class="el">…</span>  88   1 <span class="gb">info</span>            <i class="dq">"</i>{[<i class="z">0</i>]=\<i class="dq">"</i>*\<i class="dq">"</i>, {[<i class="z">0</i>]=\<i class="dq">"</i>+\<i class="dq">"</i>, \<i class="dq">"</i>x\<i class="dq">"</i>, \<i class="dq">"</i>y\<i class="dq">"</i>}, \<i class="dq">"</i>42\<i class="dq">"</i>}<i class="dq">"</i> (<span class="f">lsp</span>)</div>
<div class="abs" style="left:694px;top:261px;width:6px;height:13px;background:#333"></div><div class="r" style="left:646px;top:262px"> luatree<span class="el">…</span> 115   1 <span class="gb">info</span>            <i class="dq">"</i>*_____.\n<i class="vb">|</i>     <i class="vb">|</i>\n+__.  42\n<i class="vb">|</i>  <i class="vb">|</i>\nx  y\n<i class="dq">"</i> (<span class="f">lsp</span>)</div>
<div class="abs" style="left:694px;top:274px;width:6px;height:13px;background:#333"></div><div class="r" style="left:646px;top:275px"> luatree<span class="el">…</span> 116   1 <span class="gb">info</span>            *_____.</div>
<div class="abs fr" style="left:1272px;top:40px;width:8px;height:734px"></div>
<svg style="left:1272px;top:42px" width="8" height="8" viewBox="0 0 8 8" shape-rendering="crispEdges"><path d="M3 0h1v1h-1zM4 0h1v1h-1zM4 1h1v1h-1zM5 1h1v1h-1zM5 2h1v1h-1zM6 2h1v1h-1zM1 3h1v1h-1zM2 3h1v1h-1zM3 3h1v1h-1zM4 3h1v1h-1zM5 3h1v1h-1zM6 3h1v1h-1zM7 3h1v1h-1zM1 4h1v1h-1zM2 4h1v1h-1zM3 4h1v1h-1zM4 4h1v1h-1zM5 4h1v1h-1zM6 4h1v1h-1zM7 4h1v1h-1zM5 5h1v1h-1zM6 5h1v1h-1zM4 6h1v1h-1zM5 6h1v1h-1zM3 7h1v1h-1zM4 7h1v1h-1z" fill="#ffe4c4"/></svg><svg style="left:1272px;top:198px" width="8" height="8" viewBox="0 0 8 8" shape-rendering="crispEdges"><path d="M3 0h1v1h-1zM4 0h1v1h-1zM4 1h1v1h-1zM5 1h1v1h-1zM5 2h1v1h-1zM6 2h1v1h-1zM1 3h1v1h-1zM2 3h1v1h-1zM3 3h1v1h-1zM4 3h1v1h-1zM5 3h1v1h-1zM6 3h1v1h-1zM7 3h1v1h-1zM1 4h1v1h-1zM2 4h1v1h-1zM3 4h1v1h-1zM4 4h1v1h-1zM5 4h1v1h-1zM6 4h1v1h-1zM7 4h1v1h-1zM5 5h1v1h-1zM6 5h1v1h-1zM4 6h1v1h-1zM5 6h1v1h-1zM3 7h1v1h-1zM4 7h1v1h-1z" fill="#ffe4c4"/></svg><svg style="left:1272px;top:211px" width="8" height="8" viewBox="0 0 8 8" shape-rendering="crispEdges"><path d="M3 0h1v1h-1zM4 0h1v1h-1zM4 1h1v1h-1zM5 1h1v1h-1zM5 2h1v1h-1zM6 2h1v1h-1zM1 3h1v1h-1zM2 3h1v1h-1zM3 3h1v1h-1zM4 3h1v1h-1zM5 3h1v1h-1zM6 3h1v1h-1zM7 3h1v1h-1zM1 4h1v1h-1zM2 4h1v1h-1zM3 4h1v1h-1zM4 4h1v1h-1zM5 4h1v1h-1zM6 4h1v1h-1zM7 4h1v1h-1zM5 5h1v1h-1zM6 5h1v1h-1zM4 6h1v1h-1zM5 6h1v1h-1zM3 7h1v1h-1zM4 7h1v1h-1z" fill="#ffe4c4"/></svg><svg style="left:1272px;top:224px" width="8" height="8" viewBox="0 0 8 8" shape-rendering="crispEdges"><path d="M3 0h1v1h-1zM4 0h1v1h-1zM4 1h1v1h-1zM5 1h1v1h-1zM5 2h1v1h-1zM6 2h1v1h-1zM1 3h1v1h-1zM2 3h1v1h-1zM3 3h1v1h-1zM4 3h1v1h-1zM5 3h1v1h-1zM6 3h1v1h-1zM7 3h1v1h-1zM1 4h1v1h-1zM2 4h1v1h-1zM3 4h1v1h-1zM4 4h1v1h-1zM5 4h1v1h-1zM6 4h1v1h-1zM7 4h1v1h-1zM5 5h1v1h-1zM6 5h1v1h-1zM4 6h1v1h-1zM5 6h1v1h-1zM3 7h1v1h-1zM4 7h1v1h-1z" fill="#ffe4c4"/></svg>
<div class="r" style="left:850px;top:288px"><i class="vb">|</i>     <i class="vb">|</i></div>
<div class="r" style="left:850px;top:301px">+__.  42</div>
<div class="r" style="left:850px;top:314px"><i class="vb">|</i>  <i class="vb">|</i></div>
<div class="r" style="left:850px;top:327px">x  y</div>
<div class="r" style="left:652px;top:353px">(<span class="f">lsp</span>)</div>
<div class="abs" style="left:646px;top:183px;width:6px;height:13px;box-sizing:border-box;border:1px solid #ffe4c4"></div>
<div id="mlL" class="abs" style="border-top:1px solid #e6e6e6;border-left:1px solid #e6e6e6;border-bottom:1px solid #707070;border-right:1px solid #666"></div><div id="mlR" class="abs" style="border:1px solid #666"></div>
<div class="r" style="left:7px;top:775px;color:#000"><span style="display:inline-block;width:7.2246px;height:13px;vertical-align:top;letter-spacing:0;font-family:'DejaVu Sans',sans-serif;font-size:11px;font-weight:bold;text-indent:-0.5px;position:relative;top:-1px;transform:scaleX(.9);transform-origin:0 0">ℿ</span>U:---  <span class="b">luatree1.lean</span>   24%   L67    (Lean 4 <span class="gb">FlyC:0</span> LSP[lean4-lsp:392739] eev ElDoc) <span class="gb">19</span> [] 11:08</div>
<div class="r" style="left:645px;top:775px;color:#ccc">-:%%-  <span class="b">*Flycheck errors*</span> for buffer <span class="b">luatree1.lean</span>   All   L12    (Flycheck errors eev ElDoc) [] 11:08</div>
<div class="abs" style="left:0;top:787px;width:1280px;height:13px;background:#000"></div>
</div>
</body></html>
